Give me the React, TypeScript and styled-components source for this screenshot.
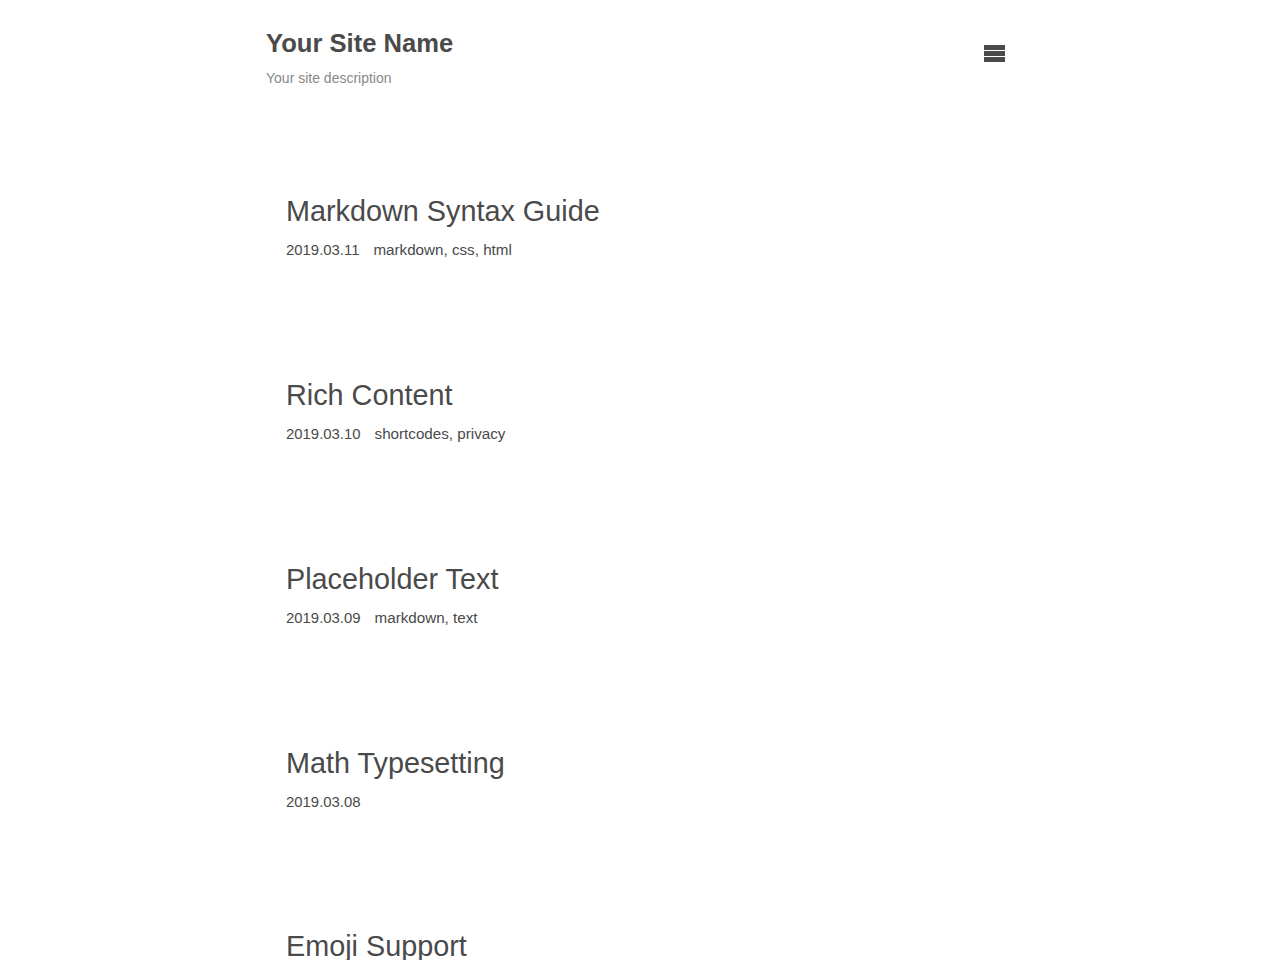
import styled, { createGlobalStyle } from "styled-components";

const posts = [
  { id: 1, title: "Markdown Syntax Guide", date: "2019.03.11", tags: ["markdown", "css", "html"] },
  { id: 2, title: "Rich Content", date: "2019.03.10", tags: ["shortcodes", "privacy"] },
  { id: 3, title: "Placeholder Text", date: "2019.03.09", tags: ["markdown", "text"] },
  { id: 4, title: "Math Typesetting", date: "2019.03.08", tags: [] },
  { id: 5, title: "Emoji Support", date: "2019.03.05", tags: ["emoji"] },
];

const GlobalStyle = createGlobalStyle`
  body {
    margin: 0;
    background: #fff;
    color: #4a4a4a;
    font-family: "Liberation Sans", Arial, sans-serif;
  }
`;

const Container = styled.div`
  width: 748px;
  margin: 0 auto;
`;

const Header = styled.header`
  display: flex;
  justify-content: space-between;
  align-items: flex-start;
  padding-top: 28px;
`;

const Brand = styled.div`
  display: flex;
  flex-direction: column;
`;

const SiteName = styled.h1`
  margin: 0;
  font-size: 25.6px;
  line-height: 1.2;
  font-weight: 700;
  color: #4a4a4a;
`;

const SiteDescription = styled.p`
  margin: 9px 0 0;
  font-size: 14px;
  line-height: 1.5;
  color: #888;
`;

const MenuButton = styled.button`
  display: flex;
  flex-direction: column;
  gap: 1px;
  margin: 17px 9px 0 0;
  padding: 0;
  border: none;
  background: none;
  cursor: pointer;
`;

const MenuBar = styled.span`
  display: block;
  width: 21px;
  height: 5px;
  background: #4a4a4a;
`;

const PostList = styled.main`
  display: flex;
  flex-direction: column;
  gap: 116.4px;
  padding: 105px 20px 0;
`;

const PostItem = styled.article`
  display: flex;
  flex-direction: column;
  gap: 11px;
`;

const PostTitle = styled.a`
  font-size: 28.8px;
  line-height: 1.2;
  color: #4a4a4a;
  text-decoration: none;
`;

const PostMeta = styled.div`
  display: flex;
  align-items: baseline;
  gap: 14px;
  line-height: 22px;
  color: #4a4a4a;
`;

const MetaText = styled.span<{ $size: number }>`
  font-size: ${(p) => p.$size}px;
`;

export default function App() {
  return (
    <>
      <GlobalStyle />
      <Container>
        <Header>
          <Brand>
            <SiteName>Your Site Name</SiteName>
            <SiteDescription>Your site description</SiteDescription>
          </Brand>
          <MenuButton aria-label="menu">
            <MenuBar />
            <MenuBar />
            <MenuBar />
          </MenuButton>
        </Header>
        <PostList>
          {posts.map((post) => (
            <PostItem key={post.id}>
              <PostTitle href="#">{post.title}</PostTitle>
              <PostMeta>
                <MetaText $size={14.9}>{post.date}</MetaText>
                {post.tags.length > 0 && (
                  <MetaText $size={15.2}>{post.tags.join(", ")}</MetaText>
                )}
              </PostMeta>
            </PostItem>
          ))}
        </PostList>
      </Container>
    </>
  );
}
